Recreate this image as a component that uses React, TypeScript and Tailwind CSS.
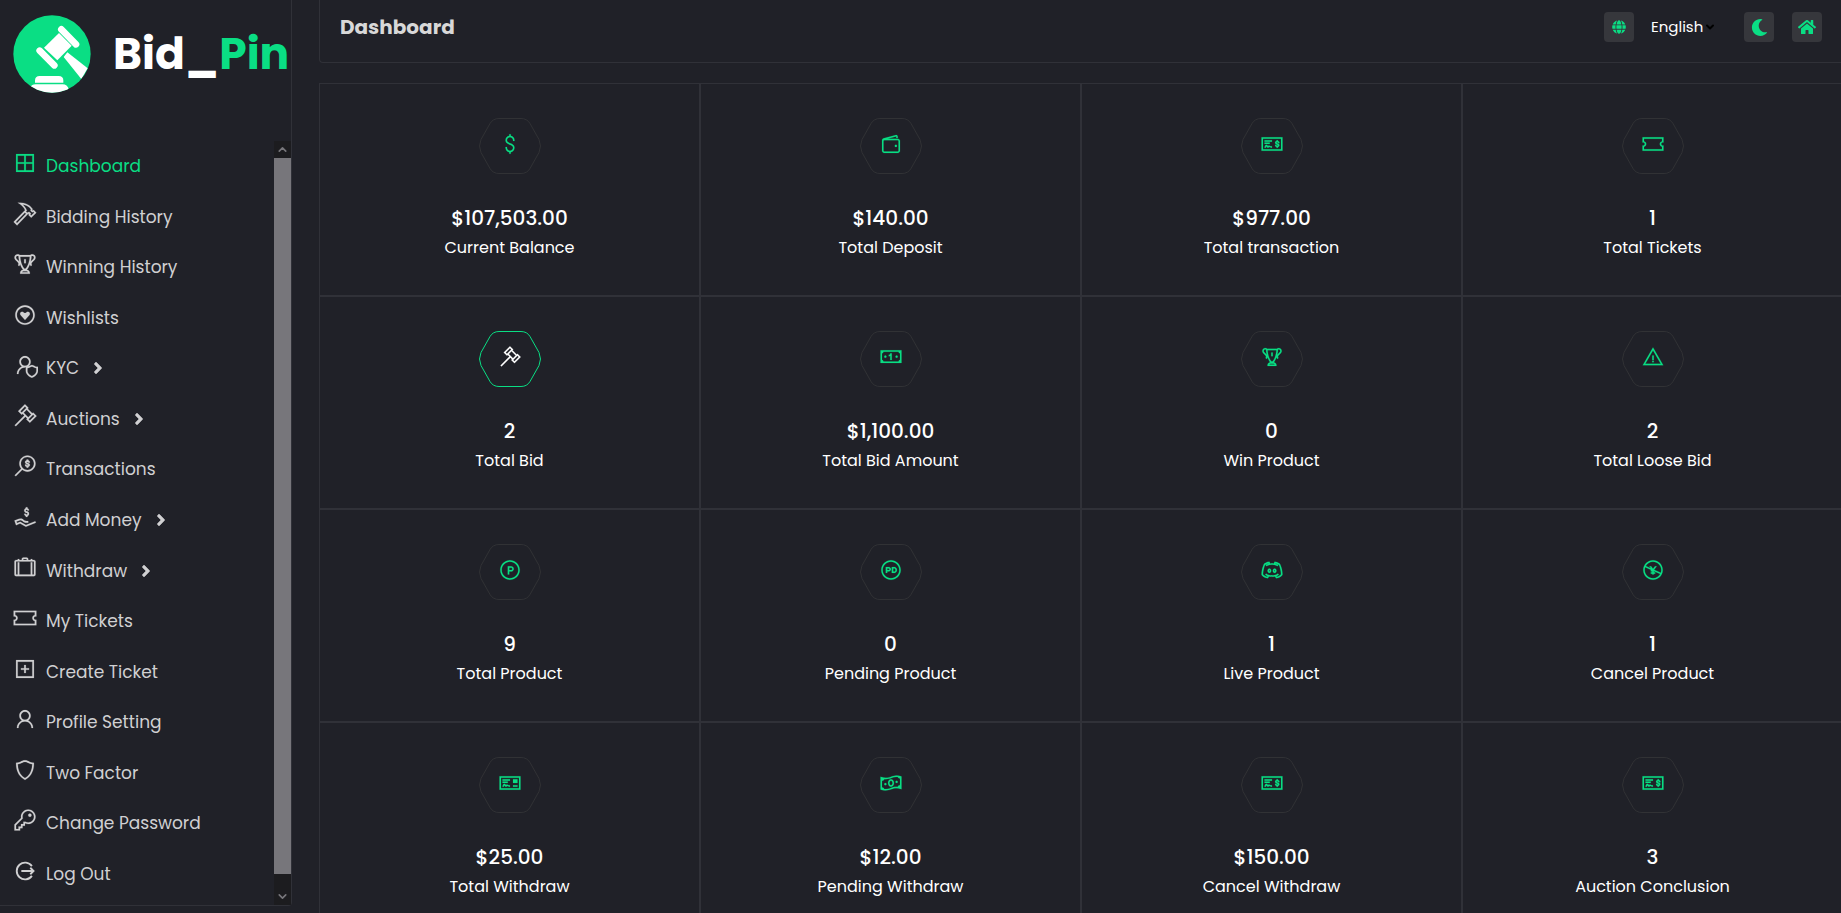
import type { ComponentType } from "react";
import {
  LiaBorderAllSolid,
  LiaCreativeCommonsNcJp,
  LiaCreativeCommonsPdAlt,
  LiaDiscord,
  LiaDollarSignSolid,
  LiaExclamationTriangleSolid,
  LiaGavelSolid,
  LiaGratipay,
  LiaHammerSolid,
  LiaHandHoldingUsdSolid,
  LiaKeySolid,
  LiaMoneyBillAltSolid,
  LiaMoneyBillWaveSolid,
  LiaMoneyCheckAltSolid,
  LiaMoneyCheckSolid,
  LiaPlusSquareSolid,
  LiaProductHunt,
  LiaSearchDollarSolid,
  LiaShieldAltSolid,
  LiaSuitcaseSolid,
  LiaTicketAltSolid,
  LiaTrophySolid,
  LiaUser,
  LiaUserShieldSolid,
  LiaWalletSolid,
} from "react-icons/lia";
import { FaAngleRight, FaGlobe, FaHome, FaMoon } from "react-icons/fa";
import { ChevronDown, ChevronUp } from "lucide-react";

type Icon = ComponentType<{ className?: string; strokeWidth?: number }>;
type NavItem = { label: string; icon: Icon; active?: boolean; nested?: boolean };
type Stat = { value: string; label: string; icon: Icon; highlighted?: boolean };

function LogOutIcon({ className }: { className?: string }) {
  return (
    <svg viewBox="0 0 32 32" className={className} fill="none" stroke="currentColor" strokeWidth="2.3" aria-hidden="true">
      <path d="M24.5 10 A10.3 10.3 0 1 0 24.5 22" />
      <path d="M11.5 16 H26.5 M22.5 12 L26.5 16 L22.5 20" />
    </svg>
  );
}

const navItems: NavItem[] = [
  { label: "Dashboard", icon: LiaBorderAllSolid, active: true },
  { label: "Bidding History", icon: LiaHammerSolid },
  { label: "Winning History", icon: LiaTrophySolid },
  { label: "Wishlists", icon: LiaGratipay },
  { label: "KYC", icon: LiaUserShieldSolid, nested: true },
  { label: "Auctions", icon: LiaGavelSolid, nested: true },
  { label: "Transactions", icon: LiaSearchDollarSolid },
  { label: "Add Money", icon: LiaHandHoldingUsdSolid, nested: true },
  { label: "Withdraw", icon: LiaSuitcaseSolid, nested: true },
  { label: "My Tickets", icon: LiaTicketAltSolid },
  { label: "Create Ticket", icon: LiaPlusSquareSolid },
  { label: "Profile Setting", icon: LiaUser },
  { label: "Two Factor", icon: LiaShieldAltSolid },
  { label: "Change Password", icon: LiaKeySolid },
  { label: "Log Out", icon: LogOutIcon },
];

const stats: Stat[] = [
  { value: "$107,503.00", label: "Current Balance", icon: LiaDollarSignSolid },
  { value: "$140.00", label: "Total Deposit", icon: LiaWalletSolid },
  { value: "$977.00", label: "Total transaction", icon: LiaMoneyCheckAltSolid },
  { value: "1", label: "Total Tickets", icon: LiaTicketAltSolid },
  { value: "2", label: "Total Bid", icon: LiaGavelSolid, highlighted: true },
  { value: "$1,100.00", label: "Total Bid Amount", icon: LiaMoneyBillAltSolid },
  { value: "0", label: "Win Product", icon: LiaTrophySolid },
  { value: "2", label: "Total Loose Bid", icon: LiaExclamationTriangleSolid },
  { value: "9", label: "Total Product", icon: LiaProductHunt },
  { value: "0", label: "Pending Product", icon: LiaCreativeCommonsPdAlt },
  { value: "1", label: "Live Product", icon: LiaDiscord },
  { value: "1", label: "Cancel Product", icon: LiaCreativeCommonsNcJp },
  { value: "$25.00", label: "Total Withdraw", icon: LiaMoneyCheckSolid },
  { value: "$12.00", label: "Pending Withdraw", icon: LiaMoneyBillWaveSolid },
  { value: "$150.00", label: "Cancel Withdraw", icon: LiaMoneyCheckAltSolid },
  { value: "3", label: "Auction Conclusion", icon: LiaMoneyCheckAltSolid },
];

function LogoMark() {
  return (
    <svg viewBox="0 0 234 234" className="size-[78px] shrink-0" aria-hidden="true">
      <clipPath id="logo-disc">
        <circle cx="117" cy="117" r="116" />
      </clipPath>
      <circle cx="117" cy="117" r="116" fill="#0ade84" />
      <g clipPath="url(#logo-disc)" fill="#fff">
        <path d="M145 43 L189 88" stroke="#fff" strokeWidth="20" strokeLinecap="round" />
        <path d="M80 107 L124 151" stroke="#fff" strokeWidth="20" strokeLinecap="round" />
        <path d="M93 98 L138 54 L176 92 L133 136 Z" />
        <path d="M163 112 L224 160 L205 192 L152 126 Z" />
        <path d="M66 203 V197 Q66 183 80 183 H137 Q151 183 151 197 V203 Z" />
        <path d="M50 234 L52 218 Q56 208 68 208 H149 Q163 208 167 222 L168 234 Z" />
      </g>
    </svg>
  );
}

function Sidebar() {
  return (
    <aside className="flex h-[calc(100vh-7px)] w-[292px] shrink-0 flex-col rounded-br border-r border-b border-[#303138]">
      <a href="#" className="flex h-[141px] shrink-0 items-start gap-[22px] pt-[15px] pl-[13px]">
        <LogoMark />
        <span className="pt-[13px] text-[44px] leading-[52px] font-bold text-white">
          Bid_<span className="text-[#0ade84]">Pin</span>
        </span>
      </a>
      <div className="flex min-h-0 flex-1">
        <nav className="flex-1 pb-1.5">
          <ul className="flex h-full flex-col">
            {navItems.map(({ label, icon: Icon, active, nested }) => (
              <li key={label} className="flex-1">
                <a
                  href="#"
                  className={`flex h-full items-center pl-3 text-[17px] leading-6 ${active ? "text-[#0ade84]" : "text-[#d0d0d2]"}`}
                >
                  <Icon className="mr-2 mb-1.5 size-[26px]" strokeWidth={0.2} />
                  {label}
                  {nested && <FaAngleRight className="ml-2.5 size-[18px]" strokeWidth={16} />}
                </a>
              </li>
            ))}
          </ul>
        </nav>
        <div className="flex w-[17px] flex-col bg-[#1c1c1f] text-[#77767b]" aria-hidden="true">
          <ChevronUp className="h-[17px] w-[17px] p-0.5" strokeWidth={3} />
          <div className="flex-1 bg-[#77767b]" />
          <ChevronDown className="mt-[14px] h-[17px] w-[17px] p-0.5" strokeWidth={3} />
        </div>
      </div>
    </aside>
  );
}

function TopBar() {
  return (
    <header className="ml-px flex h-[63px] items-start justify-between rounded-bl border-b border-l border-[#303138] pt-3 pr-[19px] pl-5">
      <h1 className="text-xl leading-[30px] font-bold text-[#d8d8d8]">Dashboard</h1>
      <div className="flex items-center">
        <label htmlFor="language" className="flex size-[30px] items-center justify-center rounded bg-[#36373c] text-[#0ade84]">
          <FaGlobe className="size-[14px]" aria-label="Language" />
        </label>
        <div className="relative ml-[17px] mr-7 flex items-center">
          <select
            id="language"
            className="w-[65px] appearance-none bg-transparent text-[15px] leading-[30px] text-white outline-none"
          >
            <option>English</option>
          </select>
          <ChevronDown className="pointer-events-none absolute right-0 size-3 text-black" strokeWidth={4} />
        </div>
        <button aria-label="Dark mode" className="flex size-[30px] items-center justify-center rounded bg-[#36373c] text-[#0ade84]">
          <FaMoon className="size-[17px]" />
        </button>
        <a href="#" aria-label="Home" className="ml-[18px] flex size-[30px] items-center justify-center rounded bg-[#36373c] text-[#0ade84]">
          <FaHome className="size-[18px]" />
        </a>
      </div>
    </header>
  );
}

function StatCard({ value, label, icon: Icon, highlighted }: Stat) {
  return (
    <article className="flex h-[213px] flex-col items-center border border-[#303138] pt-[34px] text-white">
      <div className={`grid place-items-center ${highlighted ? "text-white" : "text-[#0ade84]"}`}>
        <svg
          viewBox="0 0 62 56"
          className={`col-start-1 row-start-1 h-14 w-[62px] ${highlighted ? "text-[#0ade84]" : "text-[#313235]"}`}
          fill="none"
          stroke="currentColor"
          aria-hidden="true"
        >
          <path d="M20 .5 H42 Q48 .5 51 5.5 L60 21.5 Q63 28 60 34.5 L51 50.5 Q48 55.5 42 55.5 H20 Q14 55.5 11 50.5 L2 34.5 Q-1 28 2 21.5 L11 5.5 Q14 .5 20 .5 Z" />
        </svg>
        <Icon className="col-start-1 row-start-1 mb-1 size-6" strokeWidth={0.2} />
      </div>
      <p className="mt-[29px] text-xl leading-[30px] font-medium">{value}</p>
      <p className="text-base leading-[30px]">{label}</p>
    </article>
  );
}

export default function App() {
  return (
    <div className="flex h-screen overflow-hidden bg-[#202128] font-[Poppins,Inter,sans-serif]">
      <Sidebar />
      <main className="min-w-0 flex-1 pl-[26px]">
        <TopBar />
        <section className="mt-5 -mr-0.5 ml-px grid grid-cols-4" aria-label="Statistics">
          {stats.map((stat) => (
            <StatCard key={stat.label} {...stat} />
          ))}
        </section>
      </main>
    </div>
  );
}
